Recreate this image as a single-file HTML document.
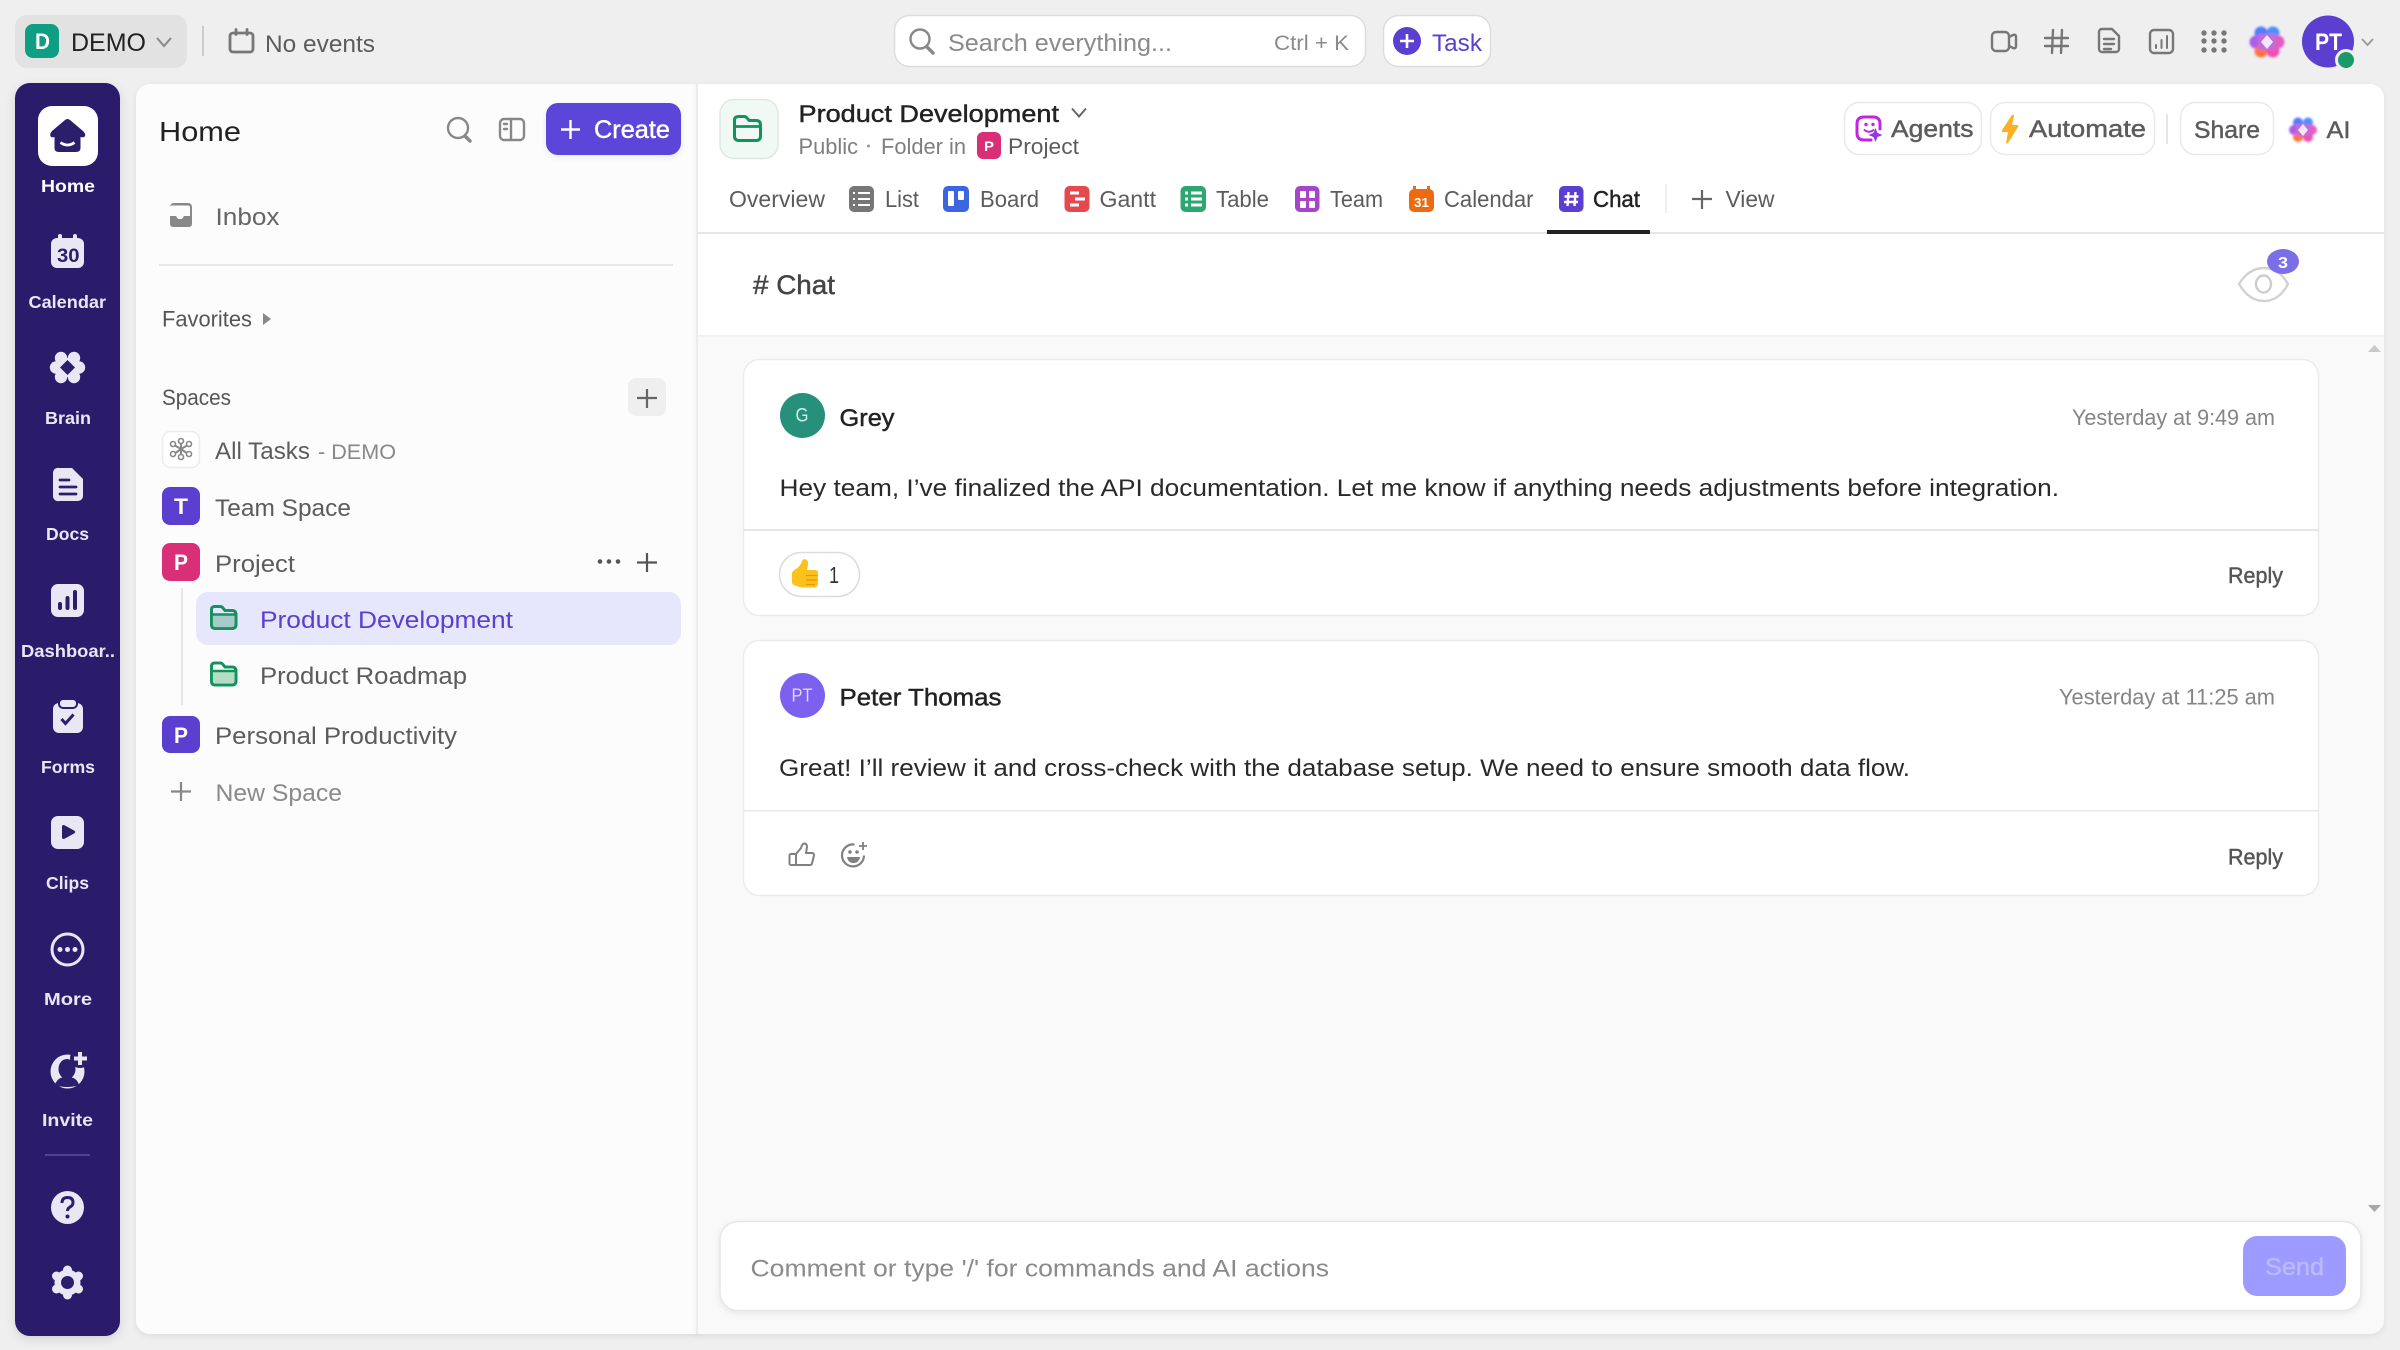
<!DOCTYPE html>
<html lang="en"><head><meta charset="utf-8"><title>Product Development - Chat</title>
<style>
html,body{margin:0;padding:0;width:2400px;height:1350px;overflow:hidden;background:#efefef}
svg{display:block}
text{font-family:"Liberation Sans","DejaVu Sans",sans-serif;font-size:24.5px;fill:#5c5c5c}
.m{stroke:currentColor;stroke-width:.45px}
.r{font-size:17.5px;font-weight:700;fill:#e9e7f5;text-anchor:start}
.d{fill:#222;color:#222}
.w{fill:#fff;font-weight:700}
.s{stroke:#777;stroke-width:2.4;fill:none;stroke-linecap:round;stroke-linejoin:round}
.l{fill:#e9e7f4}
.k{fill:#2b1f6b}
</style></head><body>
<svg xmlns="http://www.w3.org/2000/svg" width="2400" height="1350" viewBox="0 0 2400 1350">
<defs>
<filter id="sh" x="-20%" y="-20%" width="140%" height="140%"><feDropShadow dx="0" dy="3" stdDeviation="5" flood-color="#000" flood-opacity=".12"/></filter>
<filter id="sh2" x="-3%" y="-20%" width="106%" height="140%"><feDropShadow dx="0" dy="2" stdDeviation="3" flood-color="#000" flood-opacity=".08"/></filter>
<filter id="bl" x="-20%" y="-20%" width="140%" height="140%"><feGaussianBlur stdDeviation="1"/></filter>
</defs>
<rect width="2400" height="1350" fill="#efefef"/>

<!-- top bar -->
<rect x="15" y="15" width="172" height="53" rx="12" fill="#e2e2e2"/>
<rect x="25" y="24" width="34" height="34" rx="8" fill="#0f9d84"/>
<text x="35" y="49" class="w" font-size="22" style="font-size:22px" textLength="15" lengthAdjust="spacingAndGlyphs">D</text>
<text x="71" y="51" class="d" textLength="75" lengthAdjust="spacingAndGlyphs" style="font-size:25px">DEMO</text>
<path d="M157 38l7 8 7-8" fill="none" stroke="#888" stroke-width="2"/>
<rect x="202" y="26" width="2" height="30" fill="#ccc"/>
<path class="s" d="M233 33h17a3 3 0 0 1 3 3v13a3 3 0 0 1-3 3h-17a3 3 0 0 1-3-3v-13a3 3 0 0 1 3-3zM236 29.500v5M247 29.500v5" style="stroke-width:2.800"/>
<text x="265" y="52" textLength="110" lengthAdjust="spacingAndGlyphs" fill="#666">No events</text>

<rect x="894.5" y="15.5" width="471" height="51" rx="15" fill="#fff" stroke="#dcdcdc" stroke-width="1.5"/>
<circle cx="920" cy="39" r="9.5" class="s" style="stroke:#888"/><path class="s" style="stroke:#888;stroke-width:3.5" d="M927 47l6 6"/>
<text x="948" y="51" textLength="224" lengthAdjust="spacingAndGlyphs" style="fill:#8a8a8a">Search everything...</text>
<text x="1274" y="50" textLength="75" lengthAdjust="spacingAndGlyphs" style="font-size:21px;fill:#8a8a8a">Ctrl + K</text>
<rect x="1383.5" y="15.5" width="107" height="51" rx="15" fill="#fff" stroke="#dcdcdc" stroke-width="1.5"/>
<circle cx="1407" cy="41" r="14" fill="#5a3fd0"/><path d="M1400 41h14M1407 34v14" stroke="#fff" stroke-width="2.6"/>
<text x="1432" y="51" textLength="50" lengthAdjust="spacingAndGlyphs" style="fill:#5a3fd0">Task</text>

<path class="s" d="M1996 32h9a4 4 0 0 1 4 4v11a4 4 0 0 1-4 4h-9a4 4 0 0 1-4-4v-11a4 4 0 0 1 4-4zM2009 37l4-2q3-1 3 2v9q0 3-3 2l-4-2"/>
<path class="s" d="M2053 30l-1 23M2062 30l-1 23M2045 38h23M2045 46h23" style="stroke-width:2.400"/>
<path class="s" d="M2102 29h10l7 7v13a3 3 0 0 1-3 3h-14a3 3 0 0 1-3-3v-17a3 3 0 0 1 3-3zM2104 39h10M2104 44h10M2104 49h7"/>
<rect x="2150" y="30" width="23" height="23" rx="4" class="s"/><path class="s" d="M2156 48v-3M2161.500 48v-8M2167 48v-12" style="stroke-width:2"/>
<g fill="#777"><circle cx="2204" cy="33" r="2.700"/><circle cx="2214" cy="33" r="2.700"/><circle cx="2224" cy="33" r="2.700"/><circle cx="2204" cy="41" r="2.700"/><circle cx="2214" cy="41" r="2.700"/><circle cx="2224" cy="41" r="2.700"/><circle cx="2204" cy="50" r="2.700"/><circle cx="2214" cy="50" r="2.700"/><circle cx="2224" cy="50" r="2.700"/></g>
<g filter="url(#bl)"><circle cx="2261" cy="33" r="6.500" fill="#4f7cff"/><circle cx="2273" cy="33" r="6.500" fill="#4f8dff"/><circle cx="2256" cy="42" r="6.500" fill="#a95fe6"/><circle cx="2278" cy="42" r="6.500" fill="#e45bc4"/><circle cx="2261" cy="51" r="6.500" fill="#ff7441"/><circle cx="2273" cy="51" r="6.500" fill="#f04fb0"/><rect x="2258" y="34" width="18" height="16" fill="#c66bd8"/></g>
<path d="M2267 35l6 7-6 7-6-7z" fill="#f3e9ff"/>
<circle cx="2328" cy="41.500" r="26" fill="#5a3fd0"/>
<text x="2315" y="50" class="w" textLength="27" lengthAdjust="spacingAndGlyphs">PT</text>
<circle cx="2346" cy="60" r="9.500" fill="#1a9a68" stroke="#efefef" stroke-width="3"/>
<path d="M2362 39l5.500 6 5.500-6" fill="none" stroke="#999" stroke-width="1.800"/>

<!-- rail -->
<rect x="15" y="83" width="105" height="1253" rx="15" fill="#2b1f6b" filter="url(#sh)"/>
<rect x="38" y="106" width="60" height="60" rx="14" fill="#fff"/>
<path class="k" d="M67.500 119Q69 119 70 120L83 131Q86 134 85 136Q84 138 80.500 137L80.500 148Q80.500 152 76 152L59 152Q54.500 152 54.500 148L54.500 137Q51 138 50.500 136Q49.500 134 52 131L65 120Q66 119 67.500 119Z"/>
<path d="M60.500 142.500Q67.500 147.500 74.500 142.500" stroke="#fff" stroke-width="2.800" fill="none"/>
<text x="41" y="192" class="r" textLength="54" lengthAdjust="spacingAndGlyphs" style="fill:#fff">Home</text>

<rect x="51" y="238" width="33" height="30" rx="6" class="l"/><rect x="58" y="234" width="4" height="8" rx="2" class="l"/><rect x="73" y="234" width="4" height="8" rx="2" class="l"/>
<text x="57" y="262" class="k" textLength="22.500" lengthAdjust="spacingAndGlyphs" style="font-size:19px;font-weight:700;fill:#2b1f6b">30</text>
<text x="28.500" y="308" class="r" textLength="77.500" lengthAdjust="spacingAndGlyphs">Calendar</text>

<g class="l"><circle cx="61" cy="358" r="6.200"/><circle cx="74" cy="358" r="6.200"/><circle cx="56" cy="367.500" r="6.200"/><circle cx="79" cy="367.500" r="6.200"/><circle cx="61" cy="377" r="6.200"/><circle cx="74" cy="377" r="6.200"/><rect x="58" y="358" width="19" height="19"/></g>
<path class="k" d="M67.500 360l7.500 7.500-7.500 7.500-7.500-7.500z"/>
<text x="45" y="424" class="r" textLength="46" lengthAdjust="spacingAndGlyphs">Brain</text>

<path class="l" d="M59 468h13l11 11v17a5 5 0 0 1-5 5h-19a5 5 0 0 1-6-5v-23a5 5 0 0 1 6-5z"/>
<path d="M60 480h9M60 487h16M60 494h16" stroke="#2b1f6b" stroke-width="2.800" stroke-linecap="round"/>
<text x="46" y="540" class="r" textLength="43" lengthAdjust="spacingAndGlyphs">Docs</text>

<rect x="51" y="584" width="33" height="33" rx="7" class="l"/>
<path d="M60 608v-4M67.500 608v-10M75 608v-16" stroke="#2b1f6b" stroke-width="4" stroke-linecap="round"/>
<text x="21" y="657" class="r" textLength="94" lengthAdjust="spacingAndGlyphs">Dashboar..</text>

<rect x="53" y="703" width="30" height="30" rx="6" class="l"/>
<rect x="59" y="699" width="18" height="9" rx="4" class="l" stroke="#2b1f6b" stroke-width="2"/>
<path d="M61.500 719l4 4.500 8-9" stroke="#2b1f6b" stroke-width="3" fill="none"/>
<text x="41" y="773" class="r" textLength="54" lengthAdjust="spacingAndGlyphs">Forms</text>

<rect x="51" y="816" width="33" height="33" rx="7" class="l"/>
<path class="k" d="M62 827q0-3 3-1.500l9 5q2.500 1.500 0 3l-9 5q-3 1.500-3-1.500z"/>
<text x="46" y="889" class="r" textLength="43" lengthAdjust="spacingAndGlyphs">Clips</text>

<circle cx="67.500" cy="949.500" r="15.500" fill="none" stroke="#e9e7f4" stroke-width="3"/>
<g class="l"><circle cx="60" cy="949.500" r="2.500"/><circle cx="67.500" cy="949.500" r="2.500"/><circle cx="75" cy="949.500" r="2.500"/></g>
<text x="44" y="1005" class="r" textLength="48" lengthAdjust="spacingAndGlyphs">More</text>

<circle cx="67.500" cy="1071.500" r="17" class="l"/>
<circle cx="80" cy="1058" r="10" class="k"/>
<ellipse cx="67" cy="1069" rx="8.500" ry="10" class="k"/>
<path class="k" d="M55 1085q2-7 9-8h6q7 1 9 8q-5 2-12 2t-12-2z"/>
<path d="M80 1052v13M74 1058.500h13" stroke="#e9e7f4" stroke-width="4"/>
<text x="42" y="1126" class="r" textLength="51" lengthAdjust="spacingAndGlyphs">Invite</text>

<rect x="45" y="1154" width="45" height="2" fill="#4f4590"/>
<circle cx="67.500" cy="1207.500" r="16.500" class="l"/>
<path d="M62 1203q0-5.500 5.500-5.500t5.500 5q0 3-3 4.500q-2.500 1.500-2.500 4" fill="none" stroke="#2b1f6b" stroke-width="3"/>
<circle cx="67.500" cy="1216.500" r="2" class="k"/>
<g class="l"><circle cx="67.500" cy="1282.500" r="13"/><circle cx="67.500" cy="1270" r="4.500"/><circle cx="67.500" cy="1295" r="4.500"/><circle cx="56.500" cy="1276" r="4.500"/><circle cx="78.500" cy="1276" r="4.500"/><circle cx="56.500" cy="1289" r="4.500"/><circle cx="78.500" cy="1289" r="4.500"/></g>
<circle cx="67.500" cy="1282.500" r="6.500" class="k"/>

<!-- sidebar panel -->
<path d="M150 84H700V1334H150a14 14 0 0 1-14-14V98a14 14 0 0 1 14-14z" fill="#fcfcfc" filter="url(#sh2)"/>
<text x="159" y="141" class="d" textLength="82" lengthAdjust="spacingAndGlyphs" style="font-size:28px">Home</text>
<circle cx="458" cy="128" r="10" class="s" style="stroke:#888"/><path class="s" style="stroke:#888;stroke-width:3.500" d="M465 136l5 5"/>
<rect x="500" y="119" width="24" height="21" rx="4" class="s" style="stroke:#888"/><path class="s" style="stroke:#888" d="M511 119v21M504 124h3M504 129h3"/>
<rect x="546" y="103" width="135" height="52" rx="12" fill="#5b45d9" filter="url(#sh2)"/>
<path d="M561 129.500h19M570.500 120v19" stroke="#fff" stroke-width="2.400"/>
<text x="594" y="138" textLength="76" lengthAdjust="spacingAndGlyphs" class="m" style="fill:#fff;color:#fff;font-size:25px">Create</text>
<path fill="#888" d="M174 203h14a4 4 0 0 1 4 4v17a3 3 0 0 1-3 3h-16a3 3 0 0 1-3-3v-17a4 4 0 0 1 4-4z"/>
<path fill="#fcfcfc" d="M174 205.500h14a2 2 0 0 1 2 2v8.500h-6l-2 3h-4l-2-3h-6v-8.500a2 2 0 0 1 2-2z"/>
<text x="215.500" y="225" textLength="64" lengthAdjust="spacingAndGlyphs" style="fill:#666">Inbox</text>
<rect x="159" y="264" width="514" height="2" fill="#e9e9e9"/>
<text x="162" y="326.500" textLength="90" lengthAdjust="spacingAndGlyphs" style="font-size:22px;fill:#555">Favorites</text>
<path d="M263 313l8 6-8 6z" fill="#888"/>
<text x="162" y="405" textLength="69" lengthAdjust="spacingAndGlyphs" style="font-size:22px;fill:#555">Spaces</text>
<rect x="628" y="378" width="38" height="38" rx="8" fill="#efefef"/>
<path d="M637 398h20M647 389v19" stroke="#666" stroke-width="2.200"/>

<rect x="162.500" y="431.500" width="37" height="36" rx="8" fill="#fff" stroke="#ececec" stroke-width="1.500"/>
<g stroke="#888" stroke-width="2" fill="none"><path d="M181 449V442M181 449l-7-4M181 449l7-4M181 449l-7 5M181 449l7 5M181 449v6"/></g>
<g fill="#fff" stroke="#888" stroke-width="1.600"><circle cx="181" cy="441" r="2.500"/><circle cx="173" cy="444" r="2.500"/><circle cx="189" cy="444" r="2.500"/><circle cx="173" cy="454" r="2.500"/><circle cx="189" cy="454" r="2.500"/><circle cx="181" cy="457" r="2.500"/></g>
<text x="215" y="459" textLength="95" lengthAdjust="spacingAndGlyphs">All Tasks</text>
<text x="318" y="459" textLength="78" lengthAdjust="spacingAndGlyphs" style="font-size:21px;fill:#888">- DEMO</text>

<rect x="162" y="487" width="38" height="38" rx="8" fill="#5a3fd0"/>
<text x="174" y="514" class="w" style="font-size:22px" textLength="14" lengthAdjust="spacingAndGlyphs">T</text>
<text x="215" y="516" textLength="136" lengthAdjust="spacingAndGlyphs">Team Space</text>

<rect x="162" y="543" width="38" height="38" rx="8" fill="#d92f77"/>
<text x="174" y="570" class="w" style="font-size:22px" textLength="14" lengthAdjust="spacingAndGlyphs">P</text>
<text x="215" y="572" textLength="80" lengthAdjust="spacingAndGlyphs">Project</text>
<g fill="#555"><circle cx="600" cy="561.500" r="2.300"/><circle cx="609" cy="561.500" r="2.300"/><circle cx="618" cy="561.500" r="2.300"/></g>
<path d="M637 562.500h20M647 553v19" stroke="#555" stroke-width="2.200"/>
<rect x="181" y="588" width="2" height="117" fill="#e6e6e6"/>

<rect x="196" y="592" width="485" height="53" rx="12" fill="#e6e6fd"/>
<path d="M215 606.500h5q2 0 3 1.500l2 2.500h7q4 0 4 4v10q0 4-4 4h-17q-3.500 0-3.500-4v-15q0-3 3.500-3z" fill="#e6e6fd" stroke="#12925c" stroke-width="2.800"/>
<path d="M212.500 615h23v10q0 3-3 3h-17q-3 0-3-3z" fill="#a8cac8"/>
<path d="M212 614.500h24" stroke="#12925c" stroke-width="2.400"/>
<path d="M215 606.500h5q2 0 3 1.500l2 2.500h7q4 0 4 4v10q0 4-4 4h-17q-3.500 0-3.500-4v-15q0-3 3.500-3z" fill="none" stroke="#12925c" stroke-width="2.800"/>
<text x="260" y="628" textLength="253" lengthAdjust="spacingAndGlyphs" style="fill:#5a3fd0">Product Development</text>
<path d="M215 663h5q2 0 3 1.500l2 2.500h7q4 0 4 4v10q0 4-4 4h-17q-3.500 0-3.500-4v-15q0-3 3.500-3z" fill="#fcfcfc" stroke="#12925c" stroke-width="2.800"/>
<path d="M212.500 671.500h23v10q0 3-3 3h-17q-3 0-3-3z" fill="#b4dcc6"/>
<path d="M212 671h24" stroke="#12925c" stroke-width="2.400"/>
<path d="M215 663h5q2 0 3 1.500l2 2.500h7q4 0 4 4v10q0 4-4 4h-17q-3.500 0-3.500-4v-15q0-3 3.500-3z" fill="none" stroke="#12925c" stroke-width="2.800"/>
<text x="260" y="684" textLength="207" lengthAdjust="spacingAndGlyphs">Product Roadmap</text>

<rect x="162" y="716" width="38" height="37" rx="8" fill="#5a3fd0"/>
<text x="174" y="743" class="w" style="font-size:22px" textLength="14" lengthAdjust="spacingAndGlyphs">P</text>
<text x="215" y="744" textLength="242" lengthAdjust="spacingAndGlyphs">Personal Productivity</text>
<path d="M171 791.500h20M181 782v19" stroke="#888" stroke-width="2.200"/>
<text x="215.500" y="801" textLength="126.500" lengthAdjust="spacingAndGlyphs" style="fill:#8a8a8a">New Space</text>

<!-- main panel -->
<path d="M697 84H2370a14 14 0 0 1 14 14V1320a14 14 0 0 1-14 14H697z" fill="#f9f9f9" filter="url(#sh2)"/>
<path d="M697 84H2370a14 14 0 0 1 14 14V336H697z" fill="#fff"/>
<rect x="696" y="84" width="2" height="1250" fill="#ececec"/>
<rect x="697" y="335" width="1687" height="1.500" fill="#efefef"/>

<rect x="720" y="99.500" width="58" height="59" rx="14" fill="#f0f9f4" stroke="#dce9e1" stroke-width="1.500"/>
<path d="M739 116.500h5q2 0 3 1.500l2 2.500h7q4.500 0 4.500 4.500v11q0 4.500-4.500 4.500h-17q-4.500 0-4.500-4.500v-16q0-3.500 4.500-3.500z" fill="none" stroke="#12925c" stroke-width="3" stroke-linejoin="round"/>
<path d="M735 126.500h26" stroke="#12925c" stroke-width="2.800"/>
<text x="798.500" y="122" class="d m" textLength="260.500" lengthAdjust="spacingAndGlyphs">Product Development</text>
<path d="M1072 108.500l7 8 7-8" fill="none" stroke="#666" stroke-width="2"/>
<text x="798.500" y="154" textLength="59.500" lengthAdjust="spacingAndGlyphs" style="font-size:22px;fill:#7e7e7e">Public</text>
<circle cx="868.500" cy="146" r="1.500" fill="#999"/>
<text x="881" y="154" textLength="85" lengthAdjust="spacingAndGlyphs" style="font-size:22px;fill:#7e7e7e">Folder in</text>
<rect x="977" y="132" width="24" height="27" rx="6" fill="#d92f77"/>
<text x="984" y="151" class="w" style="font-size:14px" textLength="10" lengthAdjust="spacingAndGlyphs">P</text>
<text x="1008" y="154" textLength="71" lengthAdjust="spacingAndGlyphs" style="font-size:22px">Project</text>

<!-- right header buttons -->
<rect x="1844.500" y="102.500" width="137" height="52" rx="15" fill="#fff" stroke="#e9e9e9" stroke-width="1.500"/>
<path d="M1880 129v-5q0-7-7-7h-9q-7 0-7 7v9q0 7 7 7h7" fill="none" stroke="#c026e0" stroke-width="3" stroke-linecap="round"/>
<circle cx="1866" cy="124.500" r="1.700" fill="#c026e0"/><circle cx="1873" cy="124.500" r="1.700" fill="#c026e0"/><path d="M1864.500 130q4.500 3.500 9 0" fill="none" stroke="#c026e0" stroke-width="1.900" stroke-linecap="round"/>
<path d="M1875.500 128l2 5 5 2-5 2-2 5-2-5-5-2 5-2z" fill="#9333ea"/>
<text x="1891" y="137" textLength="82.500" lengthAdjust="spacingAndGlyphs" class="m" style="color:#5c5c5c">Agents</text>
<rect x="1990.500" y="102.500" width="164" height="52" rx="15" fill="#fff" stroke="#e9e9e9" stroke-width="1.500"/>
<path d="M2012 115l-10 15q-1 2 1 2h5l-2 11q0 1 2 0l10-16q1-2-1-2h-5l2-9q0-2-2-1z" fill="#fdb022"/>
<text x="2029" y="137" textLength="117" lengthAdjust="spacingAndGlyphs" class="m" style="color:#5c5c5c">Automate</text>
<rect x="2166" y="114" width="2" height="30" fill="#e6e6e6"/>
<rect x="2180.500" y="102.500" width="93" height="52" rx="15" fill="#fff" stroke="#e9e9e9" stroke-width="1.500"/>
<text x="2194" y="138" textLength="66" lengthAdjust="spacingAndGlyphs" class="m" style="color:#5c5c5c">Share</text>
<g filter="url(#bl)"><circle cx="2298" cy="122.500" r="5" fill="#4f7cff"/><circle cx="2308" cy="122.500" r="5" fill="#4f8dff"/><circle cx="2294" cy="130" r="5" fill="#a95fe6"/><circle cx="2312" cy="130" r="5" fill="#e45bc4"/><circle cx="2298" cy="137" r="5" fill="#ff7441"/><circle cx="2308" cy="137" r="5" fill="#f04fb0"/><rect x="2296" y="124" width="14" height="12" fill="#c66bd8"/></g>
<path d="M2303 124l5 6-5 6-5-6z" fill="#f3e9ff"/>
<text x="2326.500" y="138" textLength="24" lengthAdjust="spacingAndGlyphs" class="m" style="color:#5c5c5c">AI</text>

<!-- tabs -->
<rect x="697" y="232" width="1687" height="2" fill="#e6e6e6"/>
<text x="729" y="207" textLength="96" lengthAdjust="spacingAndGlyphs" style="font-size:23px">Overview</text>
<rect x="849" y="186" width="25" height="26" rx="5" fill="#777"/>
<path d="M858 193h12M858 199h12M858 205h12M853 193h2M853 199h2M853 205h2" stroke="#fff" stroke-width="2"/>
<text x="885" y="207" textLength="34" lengthAdjust="spacingAndGlyphs" style="font-size:23px">List</text>
<rect x="943" y="186" width="26" height="26" rx="5" fill="#3b66e0"/>
<rect x="948" y="191" width="6" height="15" rx="1" fill="#fff"/><rect x="958" y="191" width="6" height="9" rx="1" fill="#fff"/>
<text x="980" y="207" textLength="59" lengthAdjust="spacingAndGlyphs" style="font-size:23px">Board</text>
<rect x="1064.500" y="186" width="25" height="26" rx="5" fill="#e5484d"/>
<path d="M1070 193h9M1075 199h10M1070 205h9" stroke="#fff" stroke-width="3"/>
<text x="1099.500" y="207" textLength="56.500" lengthAdjust="spacingAndGlyphs" style="font-size:23px">Gantt</text>
<rect x="1180.500" y="186" width="25.500" height="26" rx="5" fill="#2ea66f"/>
<path d="M1185 193h3M1191 193h11M1185 199h3M1191 199h11M1185 205h3M1191 205h11" stroke="#fff" stroke-width="3"/>
<text x="1216" y="207" textLength="53" lengthAdjust="spacingAndGlyphs" style="font-size:23px">Table</text>
<rect x="1295" y="186" width="24.500" height="26" rx="5" fill="#a645c9"/>
<g fill="#fff"><rect x="1300" y="191" width="6" height="7" rx="1"/><rect x="1309" y="191" width="6" height="7" rx="1"/><rect x="1300" y="201" width="6" height="7" rx="1"/><rect x="1309" y="201" width="6" height="7" rx="1"/></g>
<text x="1330" y="207" textLength="53" lengthAdjust="spacingAndGlyphs" style="font-size:23px">Team</text>
<rect x="1409" y="189" width="25" height="23" rx="5" fill="#ee6a0f"/><rect x="1413" y="186" width="3" height="6" fill="#ee6a0f"/><rect x="1427" y="186" width="3" height="6" fill="#ee6a0f"/>
<text x="1414" y="207" class="w" style="font-size:13px" textLength="15" lengthAdjust="spacingAndGlyphs">31</text>
<text x="1444" y="207" textLength="89.500" lengthAdjust="spacingAndGlyphs" style="font-size:23px">Calendar</text>
<rect x="1559" y="186" width="24.500" height="26" rx="5" fill="#5a3fd0"/>
<path d="M1568.500 192l-1 14M1575.500 192l-1 14M1564.500 196.500h14M1564 202h14" stroke="#fff" stroke-width="2.400"/>
<text x="1593" y="207" class="d m" textLength="47" lengthAdjust="spacingAndGlyphs" style="font-size:23px">Chat</text>
<rect x="1547" y="230" width="103" height="4" fill="#222"/>
<rect x="1665" y="184" width="2" height="29" fill="#eeeeee"/>
<path d="M1692 199h20M1702 190v19" stroke="#666" stroke-width="2.200"/>
<text x="1725.500" y="207" textLength="49" lengthAdjust="spacingAndGlyphs" style="font-size:23px">View</text>

<!-- chat header -->
<text x="753" y="294" textLength="82" lengthAdjust="spacingAndGlyphs" class="m" style="font-size:27px;fill:#444;color:#444"># Chat</text>
<path d="M2239 284q10-16 25-16t24 16q-9 17-24 17t-25-17z" fill="none" stroke="#d2d2d2" stroke-width="2.400"/>
<ellipse cx="2263.500" cy="284" rx="7.500" ry="8.500" fill="none" stroke="#cdcdcd" stroke-width="2.400"/>
<ellipse cx="2283" cy="261.500" rx="16" ry="12.500" fill="#7b6fe8"/>
<text x="2278" y="268" class="w" style="font-size:16px" textLength="10" lengthAdjust="spacingAndGlyphs">3</text>

<!-- scroll arrows -->
<path d="M2368 352l6.500-7 6.500 7z" fill="#c9c9c9"/>
<path d="M2368 1205h13l-6.500 7z" fill="#a8a8a8"/>

<!-- message 1 -->
<rect x="743.500" y="359.500" width="1575" height="256" rx="16" fill="#fff" stroke="#ebebeb" stroke-width="1.500"/>
<circle cx="802.500" cy="415.500" r="22.500" fill="#26907a"/>
<text x="795.500" y="421.500" textLength="13" lengthAdjust="spacingAndGlyphs" style="font-size:19px;fill:#cfeee6">G</text>
<text x="839.500" y="426" class="d m" textLength="55" lengthAdjust="spacingAndGlyphs">Grey</text>
<text x="2072" y="425" textLength="203" lengthAdjust="spacingAndGlyphs" style="font-size:22.500px;fill:#858585">Yesterday at 9:49 am</text>
<text x="779.500" y="496" textLength="1279.500" lengthAdjust="spacingAndGlyphs" style="fill:#2a2a2a">Hey team, I’ve finalized the API documentation. Let me know if anything needs adjustments before integration.</text>
<rect x="743" y="529" width="1576" height="2" fill="#e6e6e6"/>
<rect x="779.500" y="552.500" width="80" height="44" rx="22" fill="#fff" stroke="#dcdcdc" stroke-width="1.500"/>
<path d="M805 559.500q3 0 3 3.500 0 4-1 7h8q3 0 3 3v10q0 4.500-4 4.500h-11q-3 0-5-1l-3-1q-3-1-3-3v-9q0-2 3-4 4-2 6-6 1-4.500 4-4.500z" fill="#fcc21b"/>
<path d="M806 575.500h11M806 580h11M806 584.500h9" stroke="#e59600" stroke-width="1.300"/>
<text x="829" y="583" textLength="10" lengthAdjust="spacingAndGlyphs" style="font-size:23px;fill:#333">1</text>
<text x="2228" y="583" class="m" textLength="55" lengthAdjust="spacingAndGlyphs" style="font-size:22px;fill:#555;color:#555">Reply</text>

<!-- message 2 -->
<rect x="743.500" y="640.500" width="1575" height="255" rx="16" fill="#fff" stroke="#ebebeb" stroke-width="1.500"/>
<circle cx="802.500" cy="695.500" r="22.500" fill="#7b61ee"/>
<text x="791.500" y="701.500" textLength="21" lengthAdjust="spacingAndGlyphs" style="font-size:18px;fill:#ddd8fb">PT</text>
<text x="839.500" y="705.500" class="d m" textLength="162" lengthAdjust="spacingAndGlyphs">Peter Thomas</text>
<text x="2059" y="704.500" textLength="216" lengthAdjust="spacingAndGlyphs" style="font-size:22.500px;fill:#858585">Yesterday at 11:25 am</text>
<text x="779" y="776" textLength="1131" lengthAdjust="spacingAndGlyphs" style="fill:#2a2a2a">Great! I’ll review it and cross-check with the database setup. We need to ensure smooth data flow.</text>
<rect x="743" y="810" width="1576" height="1.500" fill="#e9e9e9"/>
<path d="M796 854v11h-5a1.500 1.500 0 0 1-1.500-1.500v-8a1.500 1.500 0 0 1 1.500-1.500h5l5-6q1-4 3-4.500 3 0 3 3.500l-1 6h6q2 0 2 2.500l-2 8q-.5 1.500-2 1.500h-14" fill="none" stroke="#808080" stroke-width="2" stroke-linejoin="round"/>
<path d="M864 855.500a11 11 0 1 1-9.500-11" fill="none" stroke="#808080" stroke-width="2.200"/>
<circle cx="850" cy="852" r="1.800" fill="#808080"/><circle cx="857" cy="852" r="1.800" fill="#808080"/>
<path d="M847 857h13q-1 6-6.500 6t-6.500-6z" fill="#808080"/>
<path d="M863 842v8M859 846h8" stroke="#808080" stroke-width="1.800"/>
<text x="2228" y="864.500" class="m" textLength="55" lengthAdjust="spacingAndGlyphs" style="font-size:22px;fill:#555;color:#555">Reply</text>

<!-- composer -->
<rect x="720" y="1221.500" width="1641" height="89" rx="18" fill="#fff" stroke="#e6e6e6" stroke-width="1.500" filter="url(#sh2)"/>
<text x="750.500" y="1276.500" textLength="578.500" lengthAdjust="spacingAndGlyphs" style="font-size:24px;fill:#8a8a8a">Comment or type '/' for commands and AI actions</text>
<rect x="2243" y="1236" width="103" height="60" rx="14" fill="#9d9bff"/>
<text x="2265" y="1275" class="m" textLength="59" lengthAdjust="spacingAndGlyphs" style="font-size:24px;fill:#bcb9f6;color:#bcb9f6">Send</text>
</svg>
</body></html>
